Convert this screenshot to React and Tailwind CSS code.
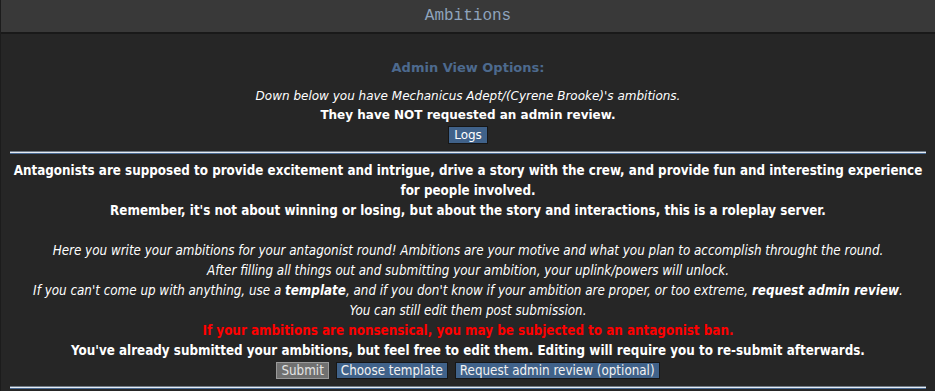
import React from "react";

const Btn = ({ children, gray }) => (
  <button
    className={
      gray
        ? "h-[17px] px-[4px] leading-[15px] bg-[#707070] border border-[#9a9a9a] text-[#e4e4e4]"
        : "h-[17px] px-[4px] leading-[15px] bg-[#40628a] border border-[#161616] text-[#f2f2f2]"
    }
  >
    {children}
  </button>
);

const Divider = () => (
  <div className="mx-[9px] flex flex-col">
    <div className="h-px bg-[#6f7a86]" />
    <div className="h-px bg-[#e6ecf4]" />
    <div className="h-px bg-[#4a6a92]" />
  </div>
);

export default function App() {
  return (
    <div className="w-[935px] h-[391px] overflow-hidden bg-[#262626] border-l border-[#1c1c1c] text-white font-['DejaVu_Sans','Verdana',sans-serif]">
      {/* title bar */}
      <div className="h-[32px] bg-[#393939] flex items-center justify-center font-['Liberation_Mono',monospace] text-[16px] text-[#8fa4bd]">
        Ambitions
      </div>
      <div className="h-[2px] bg-[#191919]" />

      {/* admin part */}
      <div className="pt-[24px] flex flex-col items-center text-[12px] leading-[19px]">
        <div className="font-bold text-[13px] text-[#4d6a8e] mb-[10px]">Admin View Options:</div>
        <div className="italic">Down below you have Mechanicus Adept/(Cyrene Brooke)'s ambitions.</div>
        <div className="font-bold">They have NOT requested an admin review.</div>
        <div className="mt-[1px]">
          <button className="h-[18px] px-[5px] bg-[#40628a] border border-[#161616] text-[12px] leading-[16px] text-white">
            Logs
          </button>
        </div>
      </div>

      <div className="mt-[6px]">
        <Divider />
      </div>

      {/* info part */}
      <div className="pt-[7px] px-[10px] flex flex-col items-center text-center text-[13.3px] leading-[20px] font-stretch-condensed">
        <div className="font-bold">
          Antagonists are supposed to provide excitement and intrigue, drive a story with the crew, and provide fun and interesting experience for people involved.
          <br />
          Remember, it's not about winning or losing, but about the story and interactions, this is a roleplay server.
        </div>
        <br />
        <div className="italic">
          Here you write your ambitions for your antagonist round! Ambitions are your motive and what you plan to accomplish throught the round.
          <br />
          After filling all things out and submitting your ambition, your uplink/powers will unlock.
          <br />
          If you can't come up with anything, use a <b>template</b>, and if you don't know if your ambition are proper, or too extreme, <b>request admin review</b>.
          <br />
          You can still edit them post submission.
        </div>
        <div className="font-bold text-[#ff0000]">If your ambitions are nonsensical, you may be subjected to an antagonist ban.</div>
        <div className="font-bold">You've already submitted your ambitions, but feel free to edit them. Editing will require you to re-submit afterwards.</div>
        <div className="mt-[1px] flex gap-[7px]">
          <Btn gray>Submit</Btn>
          <Btn>Choose template</Btn>
          <Btn>Request admin review (optional)</Btn>
        </div>
      </div>

      <div className="mt-[7px]">
        <Divider />
      </div>
    </div>
  );
}
